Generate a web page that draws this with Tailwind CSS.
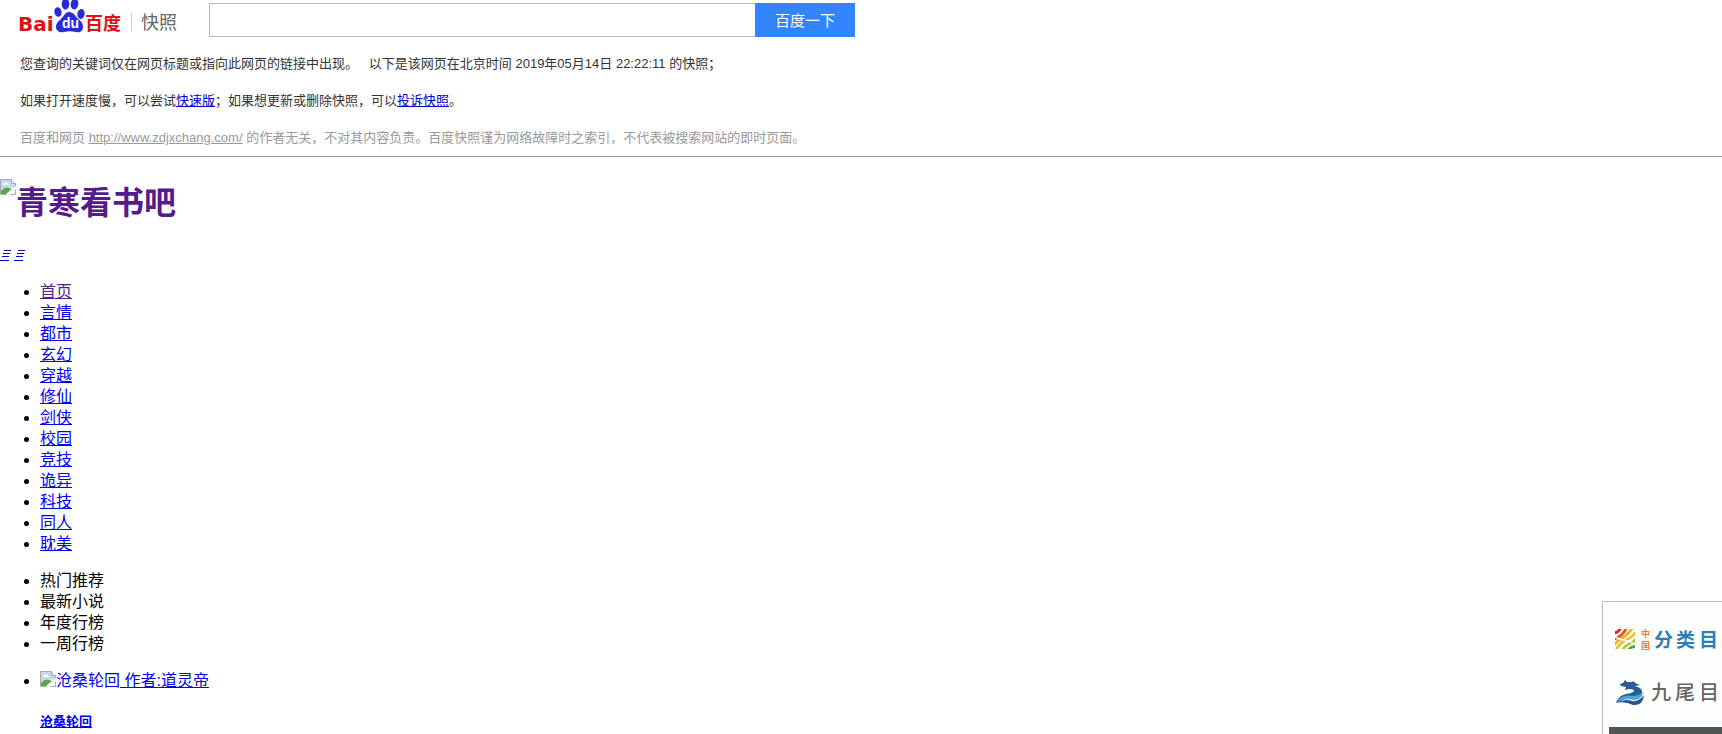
<!DOCTYPE html>
<html lang="zh-CN">
<head>
<meta charset="utf-8">
<title>百度快照</title>
<script src="https://cdn.jsdelivr.net/npm/@tailwindcss/browser@4"></script>
</head>
<body class="h-screen overflow-hidden bg-white font-['Liberation_Sans','Noto_Sans_CJK_SC',sans-serif] text-base leading-[21px] text-black">
<svg class="hidden" aria-hidden="true">
  <symbol id="broken" viewBox="0 0 16 16">
    <path d="M.5.5h11l4 4v11H.5z" fill="#fff" stroke="#a8a8a8"/>
    <path d="M1 1h10v4h4v7L12 8 7 12l-6 0z" fill="#c5d8f3"/>
    <path d="M3 6q0-2 2-2 1-1 2 0 2 0 2 2z" fill="#fff"/>
    <path d="M1 15v-3q4-5 8-3l3 1-6 5z" fill="#55a845"/>
    <path d="M6 16 16 7v3l-6 6z" fill="#fff"/>
    <path d="M11.5.5v4h4" fill="#eee" stroke="#a8a8a8"/>
  </symbol>
  <symbol id="bars" viewBox="0 0 12 12">
    <path d="M4 1.500h7M3 4.500h7M2 7.500h7M0 11.500h9" stroke="#0000b8"/>
  </symbol>
</svg>

<header class="border-b border-[#999]">
  <div class="flex h-[37px] items-start pl-[18px]">
    <a href="#" class="flex h-[37px] items-start" aria-label="百度快照">
      <svg class="h-[37px] w-[106px]" viewBox="-2 0 106 37">
        <text x="-2" y="31" font-family="DejaVu Sans" font-weight="700" font-size="20" fill="#de0f17">Bai</text>
        <g fill="#2a2ad9">
          <ellipse cx="38" cy="12" rx="3.6" ry="4.800" transform="rotate(-10 38 12)"/>
          <ellipse cx="45.500" cy="4" rx="3.800" ry="5.500"/>
          <ellipse cx="54.500" cy="4" rx="3.800" ry="5.500" transform="rotate(8 54.500 4)"/>
          <ellipse cx="61" cy="14" rx="3.600" ry="5" transform="rotate(10 61 14)"/>
          <path d="M49 12c5 0 6 4 9 7 3 2 5 4 5 8 0 4-3 6-7 5-5-1-8-1-12 0-4 1-8-1-8-5 0-4 3-6 5-8 3-3 4-7 8-7z"/>
        </g>
        <text x="42" y="28" font-family="Liberation Sans" font-weight="700" font-size="14" fill="#fff">du</text>
        <text x="65" y="30" font-family="Noto Sans CJK SC" font-weight="700" font-size="18" fill="#de0f17">百度</text>
      </svg>
      <span class="mt-[13px] ml-[7px] h-[18px] border-l border-[#ccc] pl-[9px] text-lg leading-5 text-[#666]">快照</span>
    </a>
    <form class="mt-[3px] ml-8 flex h-[34px]">
      <input type="text" aria-label="搜索" class="w-[546px] border border-r-0 border-[#b8b8b8] px-2 outline-none">
      <button type="button" class="w-[100px] bg-[#3385ff] text-[15px] text-white">百度一下</button>
    </form>
  </div>
  <div class="flex flex-col gap-4 pt-4 pb-2 pl-5 text-[13px] text-[#333]">
    <p>您查询的关键词仅在网页标题或指向此网页的链接中出现。 &nbsp; 以下是该网页在北京时间 2019年05月14日 22:22:11 的快照；</p>
    <p>如果打开速度慢，可以尝试<a href="#" class="text-[#0000cc] underline">快速版</a>；如果想更新或删除快照，可以<a href="#" class="text-[#0000cc] underline">投诉快照</a>。</p>
    <p class="text-[#999]">百度和网页 <a href="#" class="underline">http://www.zdjxchang.com/</a> 的作者无关，不对其内容负责。百度快照谨为网络故障时之索引，不代表被搜索网站的即时页面。</p>
  </div>
</header>

<main>
  <h1 class="mt-[22px] text-[32px] leading-[48px] font-bold"><a href="#" class="flex items-start text-[#551a8b]"><svg class="size-4"><use href="#broken"/></svg>青寒看书吧</a></h1>
  <div class="mt-[17px] flex h-[21px] items-center gap-[2px]">
    <a href="#" aria-label="菜单"><svg class="size-3"><use href="#bars"/></svg></a>
    <a href="#" aria-label="搜索"><svg class="size-3"><use href="#bars"/></svg></a>
  </div>
  <ul class="mt-4 list-disc pl-10 text-[#0000ee] marker:text-black">
    <li><a href="#" class="text-[#551a8b] underline">首页</a></li>
    <li><a href="#" class="underline">言情</a></li>
    <li><a href="#" class="underline">都市</a></li>
    <li><a href="#" class="underline">玄幻</a></li>
    <li><a href="#" class="underline">穿越</a></li>
    <li><a href="#" class="underline">修仙</a></li>
    <li><a href="#" class="underline">剑侠</a></li>
    <li><a href="#" class="underline">校园</a></li>
    <li><a href="#" class="underline">竞技</a></li>
    <li><a href="#" class="underline">诡异</a></li>
    <li><a href="#" class="underline">科技</a></li>
    <li><a href="#" class="underline">同人</a></li>
    <li><a href="#" class="underline">耽美</a></li>
  </ul>
  <ul class="mt-4 list-disc pl-10">
    <li>热门推荐</li>
    <li>最新小说</li>
    <li>年度行榜</li>
    <li>一周行榜</li>
  </ul>
  <ul class="mt-4 list-disc pl-10">
    <li><a href="#" class="text-[#0000ee]"><svg class="inline-block size-4 align-[-1px]"><use href="#broken"/></svg>沧桑轮回<span class="underline">&nbsp;作者:道灵帝</span></a>
      <h5 class="mt-5 text-[13px] font-bold"><a href="#" class="text-[#0000ee] underline">沧桑轮回</a></h5>
    </li>
  </ul>
</main>

<aside class="fixed right-0 bottom-0 flex h-[133px] w-[120px] flex-col overflow-hidden border-t border-l border-[#bbb] bg-[#fdfffc] pl-[6px]">
  <a href="#" aria-label="中国分类目录" class="mt-[22px] block h-8">
    <svg class="h-8 w-[113px]" viewBox="0 0 113 32">
      <clipPath id="square"><path d="M6 5h20v20H6z"/></clipPath>
      <g clip-path="url(#square)" fill="none" stroke-width="2.800">
        <path d="M4 9q6 0 8-6" stroke="#c8322e"/>
        <path d="M5 15q9-3 13-12" stroke="#e2502c"/>
        <path d="M4 22q4-5 9-8 7-4 11-11" stroke="#f0b02e"/>
        <path d="M7 26q3-6 8-9 8-3 12-9" stroke="#e6c42e"/>
        <path d="M13 27q2-5 7-7 5-2 8-6" stroke="#a9c83a"/>
        <path d="M19 27q2-4 8-5" stroke="#4fa34a"/>
        <path d="M5 12q6 4 10 4 6 1 12 5" stroke="#fdfffc" stroke-width="1.500"/>
      </g>
      <text font-family="Noto Sans CJK SC" font-weight="700" font-size="9" fill="#ee7a35"><tspan x="32" y="13">中</tspan><tspan x="32" y="25">国</tspan></text>
      <text y="23" font-family="Noto Sans CJK SC" font-weight="700" font-size="19" fill="#2b7fb5"><tspan x="45">分</tspan><tspan x="67">类</tspan><tspan x="90">目</tspan></text>
    </svg>
  </a>
  <a href="#" aria-label="九尾目录" class="mt-[21px] block h-8">
    <svg class="h-8 w-[113px]" viewBox="0 0 113 32">
      <path d="M11 7l3-1 2-3 2 2h5l2-1 1 2 5 2-5 1q8 2 7 7-1 4-8 5-9 0-18 5 2-7 10-9 7-1 8-3 0-2-5-2l-4 1 1-3-5-1z" fill="#2c5b94"/>
      <path d="M8 24q7-7 15-5 7 0 11-4-1 8-9 8-8-2-17 1z" fill="#49a9dc"/>
      <path d="M7 26q9-5 16-2 7 1 12-6-1 11-11 10-8-4-17-2z" fill="#2b4f96"/>
      <text y="23" font-family="Noto Sans CJK SC" font-weight="500" font-size="20" fill="#666"><tspan x="42">九</tspan><tspan x="66">尾</tspan><tspan x="90">目</tspan></text>
    </svg>
  </a>
  <div class="mt-auto h-[7px] shrink-0 bg-[#505652]"></div>
</aside>
</body>
</html>
